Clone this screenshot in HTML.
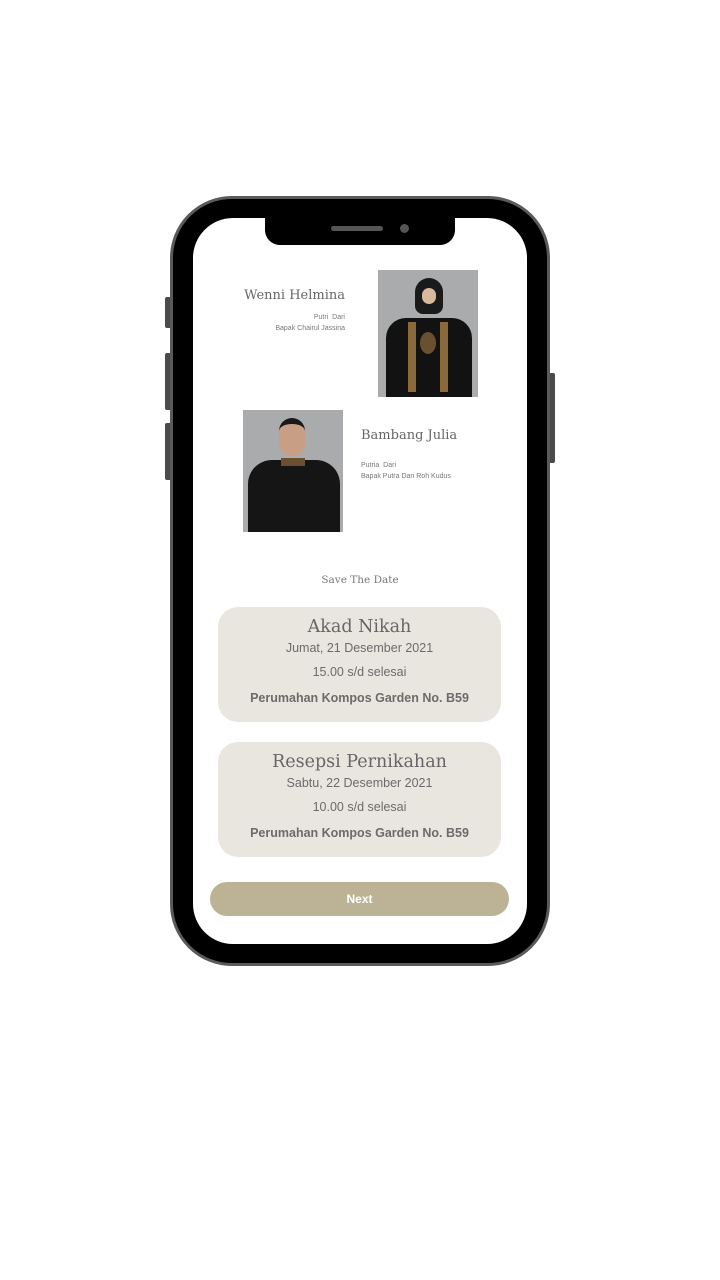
<!DOCTYPE html>
<html><head><meta charset="utf-8"><style>
body{margin:0;width:720px;height:1280px;background:#fff;position:relative;overflow:hidden;font-family:"Liberation Sans",sans-serif}
.a{position:absolute}
.phone{left:170px;top:196px;width:374px;height:764px;background:#000;border:3px solid #5a5a5a;border-radius:62px}
.screen{left:193px;top:218px;width:334px;height:726px;background:#fff;border-radius:40px}
.notch{left:265px;top:216px;width:190px;height:29px;background:#000;border-radius:0 0 15px 15px}
.btn{background:#4a4a4a;width:5px;border-radius:2px 0 0 2px}
.serif{font-family:"DejaVu Serif","Liberation Serif",serif;color:#666}
.card{left:218px;width:283px;height:115px;background:#e9e6df;border-radius:20px;text-align:center;color:#6b6b6b}
.card .t{font-family:"DejaVu Serif",serif;font-size:17.5px;margin-top:10px;color:#666;height:22px}
.card .d{font-size:12.5px;margin-top:2px}
.card .h{font-size:12.5px;margin-top:10px}
.card .p{font-size:12.5px;font-weight:bold;margin-top:12px}
.photo{background:#a9abac}
</style></head><body>
<div class="a btn" style="left:165px;top:297px;height:31px"></div>
<div class="a btn" style="left:165px;top:353px;height:57px"></div>
<div class="a btn" style="left:165px;top:423px;height:57px"></div>
<div class="a btn" style="left:550px;top:373px;height:90px;border-radius:0 2px 2px 0"></div>
<div class="a phone"></div>
<div class="a screen"></div>
<div class="a notch"></div>
<div class="a" style="left:331px;top:226px;width:52px;height:5px;background:#555;border-radius:3px"></div>
<div class="a" style="left:400px;top:224px;width:9px;height:9px;background:#555;border-radius:50%"></div>

<div class="a serif" style="right:375px;top:288px;font-size:13px;white-space:nowrap">Wenni Helmina</div>
<div class="a" style="right:375px;top:312px;font-size:7px;color:#777;text-align:right;line-height:11px">Putri&nbsp; Dari<br>Bapak Chairul Jassina</div>
<div class="a photo" style="left:378px;top:270px;width:100px;height:127px;overflow:hidden">
 <div class="a" style="left:37px;top:8px;width:28px;height:36px;background:#1a1a1a;border-radius:14px 14px 8px 8px"></div>
 <div class="a" style="left:44px;top:18px;width:14px;height:16px;background:#d9b8a0;border-radius:7px"></div>
 <div class="a" style="left:8px;top:48px;width:86px;height:85px;background:#121212;border-radius:20px 20px 0 0"></div>
 <div class="a" style="left:30px;top:52px;width:8px;height:70px;background:#8a6a3a"></div>
 <div class="a" style="left:62px;top:52px;width:8px;height:70px;background:#8a6a3a"></div>
 <div class="a" style="left:42px;top:62px;width:16px;height:22px;background:#6a5030;border-radius:50%"></div>
</div>

<div class="a photo" style="left:243px;top:410px;width:100px;height:122px;overflow:hidden">
 <div class="a" style="left:36px;top:8px;width:26px;height:32px;background:#c89f85;border-radius:13px 13px 12px 12px;border-top:6px solid #1a1a1a"></div>
 <div class="a" style="left:5px;top:50px;width:92px;height:80px;background:#151515;border-radius:24px 24px 0 0"></div>
 <div class="a" style="left:38px;top:48px;width:24px;height:8px;background:#6a5030"></div>
</div>
<div class="a serif" style="left:361px;top:428px;font-size:13px">Bambang Julia</div>
<div class="a" style="left:361px;top:460px;font-size:7px;color:#777;line-height:11px">Putria&nbsp; Dari<br>Bapak Putra Dan Roh Kudus</div>

<div class="a serif" style="left:0;width:720px;top:574px;text-align:center;font-size:10.5px;color:#777">Save The Date</div>

<div class="a card" style="top:607px"><div class="t">Akad Nikah</div><div class="d">Jumat, 21 Desember 2021</div><div class="h">15.00 s/d selesai</div><div class="p">Perumahan Kompos Garden No. B59</div></div>
<div class="a card" style="top:742px"><div class="t">Resepsi Pernikahan</div><div class="d">Sabtu, 22 Desember 2021</div><div class="h">10.00 s/d selesai</div><div class="p">Perumahan Kompos Garden No. B59</div></div>

<div class="a" style="left:210px;top:882px;width:299px;height:34px;background:#bcb396;border-radius:17px;color:#fff;font-weight:bold;font-size:12px;text-align:center;line-height:34px">Next</div>
</body></html>
